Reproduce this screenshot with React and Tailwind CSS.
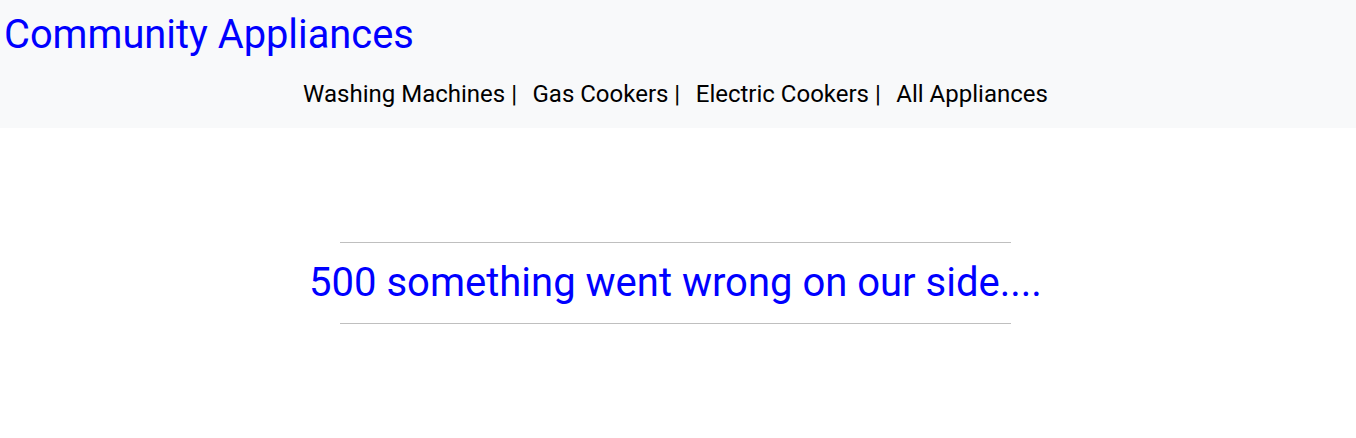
import React from 'react';

const links = ['Washing Machines |', 'Gas Cookers |', 'Electric Cookers |', 'All Appliances'];

export default function App() {
  return (
    <div className="min-h-[438px] bg-white font-['Roboto',sans-serif]">
      <header className="h-[128px] bg-[#f8f9fa]">
        <h1 className="pl-[4px] pt-[11px] text-[39.8px] leading-[48px] text-[#0000ff]">
          Community Appliances
        </h1>
        <nav className="mt-[21px] flex justify-center gap-[15.5px] pr-[5px] text-[24px] leading-[28px] text-black">
          {links.map(l => (
            <a key={l} href="#" className="whitespace-pre">{l}</a>
          ))}
        </nav>
      </header>

      <main className="pt-[114px]">
        <div className="ml-[340px] w-[671px]">
          <hr className="border-t border-[#bfbfbf]" />
          <h2 className="-mx-[40px] whitespace-nowrap text-center text-[40px] leading-[80px] text-[#0000ff]">
            500 something went wrong on our side....
          </h2>
          <hr className="border-t border-[#bfbfbf]" />
        </div>
      </main>
    </div>
  );
}
